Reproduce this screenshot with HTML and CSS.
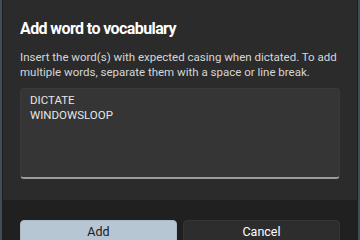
FILE: index.html
```html
<!DOCTYPE html>
<html lang="en">
<head>
  <meta charset="UTF-8" />
  <meta name="viewport" content="width=device-width, initial-scale=1" />
  <title>Add word to vocabulary</title>
  <link rel="stylesheet" href="styles.css">
</head>
<body>
<div class="dialog">
  <div class="dialog-body">
    <h1 class="dialog-title">Add word to vocabulary</h1>
    <p class="dialog-text">Insert the word(s) with expected casing when dictated. To add multiple words, separate them with a space or line break.</p>
    <div class="word-box">
      <div class="word">DICTATE</div>
      <div class="word">WINDOWSLOOP</div>
    </div>
  </div>
  <div class="dialog-footer">
    <button class="btn btn-primary">Add</button>
    <button class="btn">Cancel</button>
  </div>
</div>
</body>
</html>
```

FILE: styles.css
```css
body {
  margin: 0;
  background: #434b57;
  font-family: Roboto, 'Noto Sans', sans-serif;
  height: 240px;
  overflow: hidden;
  padding: 0 2px;
}

.dialog {
  height: 240px;
  background: #2b2b2b;
  display: flex;
  flex-direction: column;
  border-left: 1px solid #1f1f1f;
  border-right: 1px solid #1f1f1f;
  overflow: hidden;
}

.dialog-body {
  flex-shrink: 0;
  padding: 18px 17px 0 17px;
  height: 182px;
}

.dialog-title {
  margin: 0;
  font-size: 16px;
  font-weight: 700;
  letter-spacing: -0.6px;
  color: #ffffff;
  line-height: 22px;
}

.dialog-text {
  margin: 10px 0 0 0;
  font-size: 11.5px;
  line-height: 15px;
  color: #d6d6d6;
}

.word-box {
  margin-top: 8px;
  height: 80px;
  background: #353535;
  border: 1px solid #3a3a3a;
  border-bottom: 2px solid #9a9a9a;
  border-radius: 4px;
  padding: 4px 9px;
}

.word {
  font-size: 11.5px;
  line-height: 15px;
  color: #e6e6e6;
}

.dialog-footer {
  flex-shrink: 0;
  height: 40px;
  background: #202020;
  display: flex;
  gap: 6px;
  padding: 20px 17px 0 17px;
}

.btn {
  flex: 1;
  height: 32px;
  border-radius: 4px;
  border: 1px solid #353535;
  background: #2d2d2d;
  color: #ffffff;
  font-family: inherit;
  font-size: 12.5px;
  padding: 0;
  line-height: 21px;
  align-self: flex-start;
  display: flex;
  justify-content: center;
  align-items: flex-start;
}

.btn-primary {
  background: #b6c6d2;
  border-color: #a9b9c5;
  color: #1a1a1a;
}
```
